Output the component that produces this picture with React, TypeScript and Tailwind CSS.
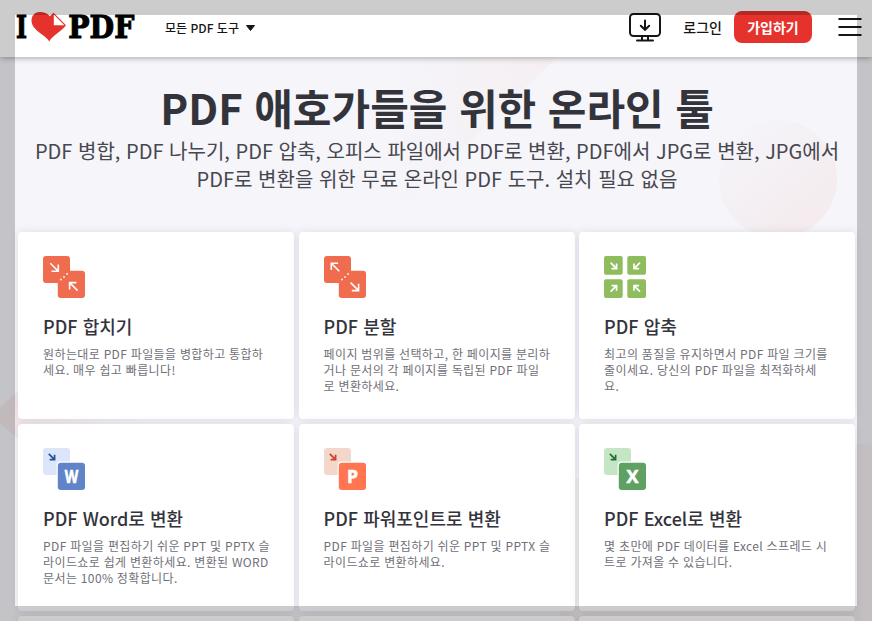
import React from "react";

type Dir = "se" | "nw" | "sw" | "ne";

const ROT: Record<Dir, number> = { se: 0, sw: 90, nw: 180, ne: 270 };

function Arrow({ x, y, dir, r = 4, w = 1.6, color = "#fff" }: { x: number; y: number; dir: Dir; r?: number; w?: number; color?: string }) {
  return (
    <path
      transform={`translate(${x} ${y}) rotate(${ROT[dir]})`}
      d={`M${-r} ${-r}L${r} ${r}M${r} ${-r * 0.7}V${r}H${-r * 0.7}`}
      stroke={color}
      strokeWidth={w}
      fill="none"
    />
  );
}

function PairIcon({ a, b }: { a: Dir; b: Dir }) {
  return (
    <svg width="42" height="42" viewBox="0 0 42 42" className="block">
      <rect width="27" height="27" rx="3" fill="#f06c4e" />
      <rect x="14.8" y="14.8" width="27.2" height="27.2" rx="3" fill="#f06c4e" />
      <Arrow x={11.3} y={11.3} dir={a} />
      <Arrow x={30.6} y={30.6} dir={b} />
      <g fill="#fff">
        <rect x="17.1" y="22.7" width="1.6" height="1.6" />
        <rect x="20.2" y="20.2" width="1.6" height="1.6" />
        <rect x="23.3" y="17.2" width="1.6" height="1.6" />
      </g>
    </svg>
  );
}

function CompressIcon() {
  return (
    <svg width="42" height="42" viewBox="0 0 42 42" className="block">
      <g fill="#8fbc5d">
        <rect width="18.7" height="18.7" rx="2" />
        <rect x="23.3" width="18.7" height="18.7" rx="2" />
        <rect y="23.3" width="18.7" height="18.7" rx="2" />
        <rect x="23.3" y="23.3" width="18.7" height="18.7" rx="2" />
      </g>
      <Arrow x={9.6} y={9.6} dir="se" r={3} w={1.7} />
      <Arrow x={33} y={9.6} dir="sw" r={3} w={1.7} />
      <Arrow x={9.6} y={32.6} dir="ne" r={3} w={1.7} />
      <Arrow x={33} y={32.6} dir="nw" r={3} w={1.7} />
    </svg>
  );
}

function ConvertIcon({ letter, light, main, arrow, width }: { letter: string; light: string; main: string; arrow: string; width: number }) {
  return (
    <svg width="42" height="42" viewBox="0 0 42 42" className="block">
      <rect width="27" height="27" rx="3" fill={light} />
      <rect x="13.6" y="13.6" width="29.6" height="29.6" rx="4" fill="#fff" />
      <rect x="14.8" y="14.8" width="27.2" height="27.2" rx="3" fill={main} />
      <Arrow x={8.7} y={8.7} dir="se" r={2.9} w={1.7} color={arrow} />
      <text
        x="28.4"
        y="34.8"
        textAnchor="middle"
        textLength={width}
        lengthAdjust="spacingAndGlyphs"
        fill="#fff"
        stroke="#fff"
        strokeWidth=".6"
        className="font-['Open_Sans',sans-serif] text-[17.5px] font-bold"
      >
        {letter}
      </text>
    </svg>
  );
}

const tools: { title: string; lines: string[]; icon: React.ReactNode }[] = [
  {
    title: "PDF 합치기",
    lines: ["원하는대로 PDF 파일들을 병합하고 통합하", "세요. 매우 쉽고 빠릅니다!"],
    icon: <PairIcon a="se" b="nw" />,
  },
  {
    title: "PDF 분할",
    lines: ["페이지 범위를 선택하고, 한 페이지를 분리하", "거나 문서의 각 페이지를 독립된 PDF 파일", "로 변환하세요."],
    icon: <PairIcon a="nw" b="se" />,
  },
  {
    title: "PDF 압축",
    lines: ["최고의 품질을 유지하면서 PDF 파일 크기를", "줄이세요. 당신의 PDF 파일을 최적화하세", "요."],
    icon: <CompressIcon />,
  },
  {
    title: "PDF Word로 변환",
    lines: ["PDF 파일을 편집하기 쉬운 PPT 및 PPTX 슬", "라이드쇼로 쉽게 변환하세요. 변환된 WORD", "문서는 100% 정확합니다."],
    icon: <ConvertIcon letter="W" light="#dce5fa" main="#6083c9" arrow="#22539b" width={13.5} />,
  },
  {
    title: "PDF 파워포인트로 변환",
    lines: ["PDF 파일을 편집하기 쉬운 PPT 및 PPTX 슬", "라이드쇼로 변환하세요."],
    icon: <ConvertIcon letter="P" light="#f3d7cb" main="#ff7651" arrow="#cd4128" width={11} />,
  },
  {
    title: "PDF Excel로 변환",
    lines: ["몇 초만에 PDF 데이터를 Excel 스프레드 시", "트로 가져올 수 있습니다."],
    icon: <ConvertIcon letter="X" light="#c4e6c5" main="#5fa163" arrow="#226f31" width={12} />,
  },
  { title: "", lines: [], icon: null },
  { title: "", lines: [], icon: null },
  { title: "", lines: [], icon: null },
];

function Logo() {
  return (
    <svg width="130" height="44" viewBox="0 0 130 44" className="block overflow-visible">
      <g className="font-['DejaVu_Serif',serif] text-[31px] font-bold" fill="#000" stroke="#000" strokeWidth="1.1">
        <text x="1" y="30" textLength="11" lengthAdjust="spacingAndGlyphs">I</text>
        <text x="53.300" y="30" textLength="66" lengthAdjust="spacingAndGlyphs">PDF</text>
      </g>
      <path
        d="M34.3 33.5C31.5 27.500 16.500 22.5 16.500 12.5C16.500 7 20.500 4 24.800 4C29 4 32.500 5 34.800 8.300L38.600 4.800L51 17.200C47.500 22.500 37 27.500 34.300 33.500Z"
        fill="#e5322d"
      />
      <path d="M38.800 6.500V17.300H49.400Z" fill="#fff" />
    </svg>
  );
}

function Decor() {
  return (
    <svg className="absolute inset-0" width="872" height="621" viewBox="0 0 872 621">
      <defs>
        <linearGradient id="circle" x1=".1" y1="0" x2=".9" y2="1">
          <stop offset=".1" stopColor="#f5f4f9" />
          <stop offset=".8" stopColor="#f4ecef" />
        </linearGradient>
        <linearGradient id="band" gradientUnits="userSpaceOnUse" x1="390" y1="0" x2="550" y2="0">
          <stop offset="0" stopColor="#f5f5fa" />
          <stop offset="1" stopColor="#f5eff2" />
        </linearGradient>
        <linearGradient id="left" x1="0" y1="0" x2="1" y2="0">
          <stop offset=".1" stopColor="#f3e8ea" />
          <stop offset="1" stopColor="#f5f5fa" />
        </linearGradient>
      </defs>
      <path d="M390 57H557L390 220Z" fill="url(#band)" />
      <circle cx="778" cy="179" r="59" fill="url(#circle)" />
      <path d="M150 275L-1 408Q-7 415 -1 423L150 545Z" fill="url(#left)" />
      <path d="M560 480L872 443V621H560Z" fill="#f4eef1" />
    </svg>
  );
}

export default function App() {
  return (
    <div className="relative flex h-[621px] w-[872px] flex-col overflow-hidden bg-[#f5f5fa] font-['Noto_Sans_CJK_KR',sans-serif] text-[#33333b]">
      <Decor />
      <header className="relative flex h-[57px] shrink-0 items-start bg-white shadow-[0_1px_6px_rgba(0,0,0,0.32)]">
        <div className="w-[122px] shrink-0 pt-2 pl-[15px]">
          <Logo />
        </div>
        <div className="ml-[43px] flex h-[55px] items-center gap-[7px] text-xs font-medium text-[#161616]">
          <span className="whitespace-nowrap [word-spacing:0.7px]">모든 PDF 도구</span>
          <svg width="9" height="6" viewBox="0 0 9 6"><path d="M.5.5H8.500L4.500 5.500Z" fill="#161616" stroke="#161616" strokeLinejoin="round" /></svg>
        </div>
        <div className="ml-auto flex h-[54px] items-center pr-2.5">
          <svg width="34" height="30" viewBox="0 0 34 30" fill="none" stroke="#161616" strokeWidth="2" strokeLinecap="round">
            <rect x="2" y="2" width="30" height="22" rx="3.500" />
            <path d="M17 8.500V17.500M12.800 13.800L17 17.800L21.200 13.800M14 24V28M20 24V28M9 28.500H25" />
          </svg>
          <span className="ml-[21px] text-sm font-medium whitespace-nowrap text-[#161616]">로그인</span>
          <button className="ml-3 h-8 w-[78px] rounded-lg bg-[#e5322d] text-sm font-bold whitespace-nowrap text-white">가입하기</button>
          <svg className="ml-[26px]" width="24" height="20" viewBox="0 0 24 20" stroke="#161616" strokeWidth="2">
            <path d="M.5 2H23.500M.5 10H23.500M.5 18H23.500" />
          </svg>
        </div>
      </header>

      <section className="relative flex h-[174.500px] shrink-0 flex-col items-center pt-[23px] pl-[2px]">
        <h1 className="h-[57px] text-[42px] leading-[54px] font-bold whitespace-nowrap [word-spacing:2px]">PDF 애호가들을 위한 온라인 툴</h1>
        <h2 className="text-center text-[20px] leading-7 whitespace-nowrap text-[#47474f] [word-spacing:1.15px]">
          PDF 병합, PDF 나누기, PDF 압축, 오피스 파일에서 PDF로 변환, PDF에서 JPG로 변환, JPG에서
          <br />
          PDF로 변환을 위한 무료 온라인 PDF 도구. 설치 필요 없음
        </h2>
      </section>

      <main className="relative grid shrink-0 auto-rows-[187px] grid-cols-[276px_276px_276px] gap-x-[4.500px] gap-y-[5px] pl-[18.400px]">
        {tools.map((t, i) => (
          <article key={i} className="rounded-[4px] bg-white px-[24.700px] pt-[24.500px] shadow-[0_0_8px_rgba(60,60,100,0.13)]">
            {t.icon}
            {t.title && <h3 className="mt-[14px] text-lg leading-7 font-medium whitespace-nowrap [word-spacing:1.1px]">{t.title}</h3>}
            <p className="mt-[6px] text-xs leading-4 tracking-[0.38px] whitespace-nowrap text-[#707078] [word-spacing:0.4px]">
              {t.lines.map((l) => (
                <span key={l} className="block">{l}</span>
              ))}
            </p>
          </article>
        ))}
      </main>

      <div className="pointer-events-none absolute inset-0 border-[15px] border-black/20" />
    </div>
  );
}
